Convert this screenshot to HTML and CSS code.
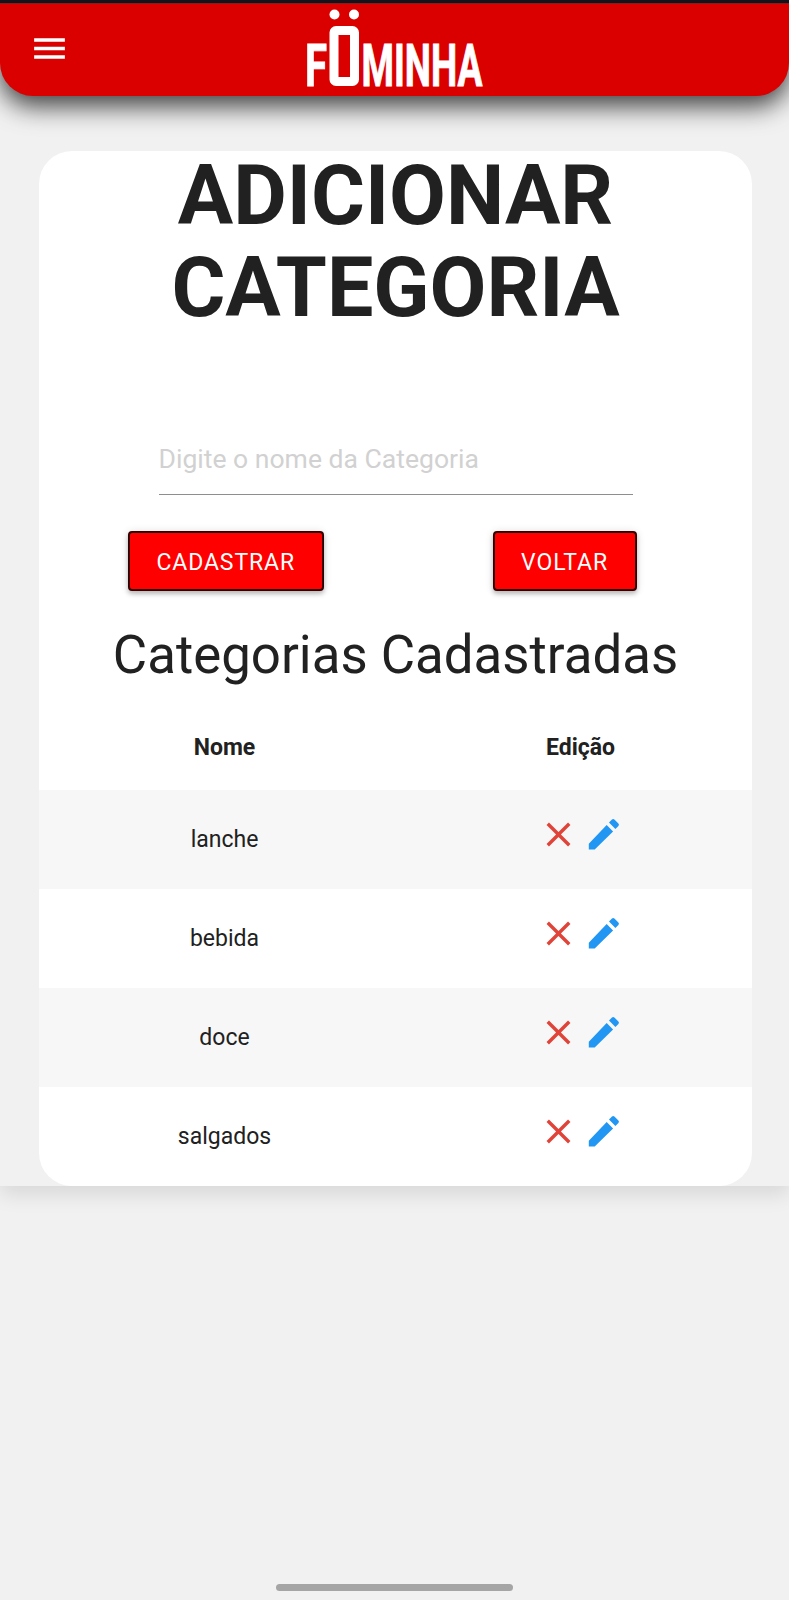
FILE: index.html
```html
<!DOCTYPE html>
<html lang="pt-BR">
<head>
<meta charset="utf-8">
<title>Föminha - Adicionar Categoria</title>
<link rel="stylesheet" href="styles.css">
</head>
<body>
<svg width="0" height="0" class="defs">
  <symbol id="close" viewBox="0 0 24 24"><path d="M19 6.41L17.59 5 12 10.59 6.41 5 5 6.41 10.59 12 5 17.59 6.41 19 12 13.41 17.59 19 19 17.59 13.41 12z"/></symbol>
  <symbol id="edit" viewBox="0 0 24 24"><path d="M3.4 17.35V20.8h3.45L17.6 10.2l-3.75-3.75L3.4 17.35zM20.71 7.04a1 1 0 0 0 0-1.41l-2.34-2.34a1 1 0 0 0-1.41 0l-1.75 1.75 3.75 3.75 1.75-1.75z"/></symbol>
</svg>
<div class="page">
  <header class="topbar">
    <svg class="menu" viewBox="0 0 24 24"><path d="M3 18h18v-2H3v2zm0-5h18v-2H3v2zm0-7v2h18V6H3z"/></svg>
    <svg class="logo" viewBox="0 0 180 80" role="img" aria-label="Föminha">
      <text x="-2" y="76.5" textLength="22" lengthAdjust="spacingAndGlyphs">F</text>
      <rect class="ring" x="27" y="21.5" width="20.5" height="51" rx="2"/>
      <circle cx="27.5" cy="5.5" r="5"/><circle cx="47" cy="5.5" r="5"/>
      <text x="54.5" y="76.5" textLength="121" lengthAdjust="spacingAndGlyphs">MINHA</text>
    </svg>
  </header>
  <main class="card">
    <h1>ADICIONAR CATEGORIA</h1>
    <input class="field" type="text" placeholder="Digite o nome da Categoria">
    <div class="actions">
      <button class="btn">CADASTRAR</button>
      <button class="btn">VOLTAR</button>
    </div>
    <h2>Categorias Cadastradas</h2>
    <div class="row head"><span>Nome</span><span>Edição</span></div>
    <div class="row striped"><span>lanche</span><span class="icons"><svg class="del"><use href="#close"/></svg><svg class="edit"><use href="#edit"/></svg></span></div>
    <div class="row"><span>bebida</span><span class="icons"><svg class="del"><use href="#close"/></svg><svg class="edit"><use href="#edit"/></svg></span></div>
    <div class="row striped"><span>doce</span><span class="icons"><svg class="del"><use href="#close"/></svg><svg class="edit"><use href="#edit"/></svg></span></div>
    <div class="row"><span>salgados</span><span class="icons"><svg class="del"><use href="#close"/></svg><svg class="edit"><use href="#edit"/></svg></span></div>
  </main>
</div>
<div class="homebar"></div>
</body>
</html>
```
FILE: styles.css
```css
* { box-sizing: border-box; }
body {
  margin: 0;
  height: 1600px;
  display: flex;
  flex-direction: column;
  border-top: 3px solid #14121a;
  background: #f1f1f1;
  color: #212121;
  font-family: Roboto, sans-serif;
  font-size: 23px;
}
.defs { position: absolute; }
.page { box-shadow: 0 8px 20px rgba(0, 0, 0, .11); }
.topbar {
  height: 93px;
  display: flex;
  align-items: flex-start;
  padding: 6px 0 0 29px;
  background: #da0000;
  border-top: 1px solid #8c1c1c;
  border-radius: 0 0 33px 33px;
  box-shadow: 0 10px 26px rgba(0, 0, 0, .75);
}
.menu { width: 41px; height: 41px; margin-top: 18px; fill: #fff; }
.logo { width: 180px; height: 80px; margin-left: 237px; margin-top: -1px; fill: #fff; overflow: visible; }
.logo text { font: 700 59.5px Roboto, sans-serif; stroke: #fff; stroke-width: .9px; }
.logo .ring { fill: none; stroke: #fff; stroke-width: 9px; }
.card {
  display: flex;
  flex-direction: column;
  width: 713px;
  height: 1035px;
  margin: 55px 0 0 39px;
  border-radius: 33px;
  background: #fff;
}
h1 {
  width: 500px;
  margin: -1px auto 0;
  font-size: 82.5px;
  line-height: 91.5px;
  font-weight: 700;
  text-align: center;
}
.field {
  width: 474px;
  height: 74px;
  margin: 90px 0 0 119.5px;
  padding: 0;
  border: 0;
  border-bottom: 1px solid #8e8e8e;
  background: none;
  font: 400 26.55px Roboto, sans-serif;
}
.field::placeholder { color: #d1d1d1; opacity: 1; }
.actions { display: flex; justify-content: space-between; margin: 36px 115.5px 0 89px; }
.btn {
  height: 60px;
  padding: 2px 26.5px 0 26.5px;
  border: 2px solid #300;
  border-radius: 4px;
  background: #f00;
  color: #fff;
  font: 400 23px Roboto, sans-serif;
  letter-spacing: .88px;
  box-shadow: 0 3px 4px rgba(0, 0, 0, .2), 0 1px 8px rgba(0, 0, 0, .14);
}
h2 { margin: 35px 0 0; font-size: 52.8px; line-height: 58px; font-weight: 400; text-align: center; }
.row { height: 99px; flex: none; display: grid; grid-template-columns: 371px 341px; align-items: center; text-align: center; }
.row.head { height: 106px; padding-top: 20px; font-weight: 700; }
.striped { background: #f7f7f7; }
.icons { display: flex; justify-content: center; gap: 4px; padding-bottom: 11px; }
.icons svg { width: 41px; height: 41px; }
.del { fill: #e04438; }
.edit { fill: #2196f3; }
.homebar { width: 237px; height: 7px; margin: auto auto 9px; border-radius: 4px; background: #a5a5a5; }
```
